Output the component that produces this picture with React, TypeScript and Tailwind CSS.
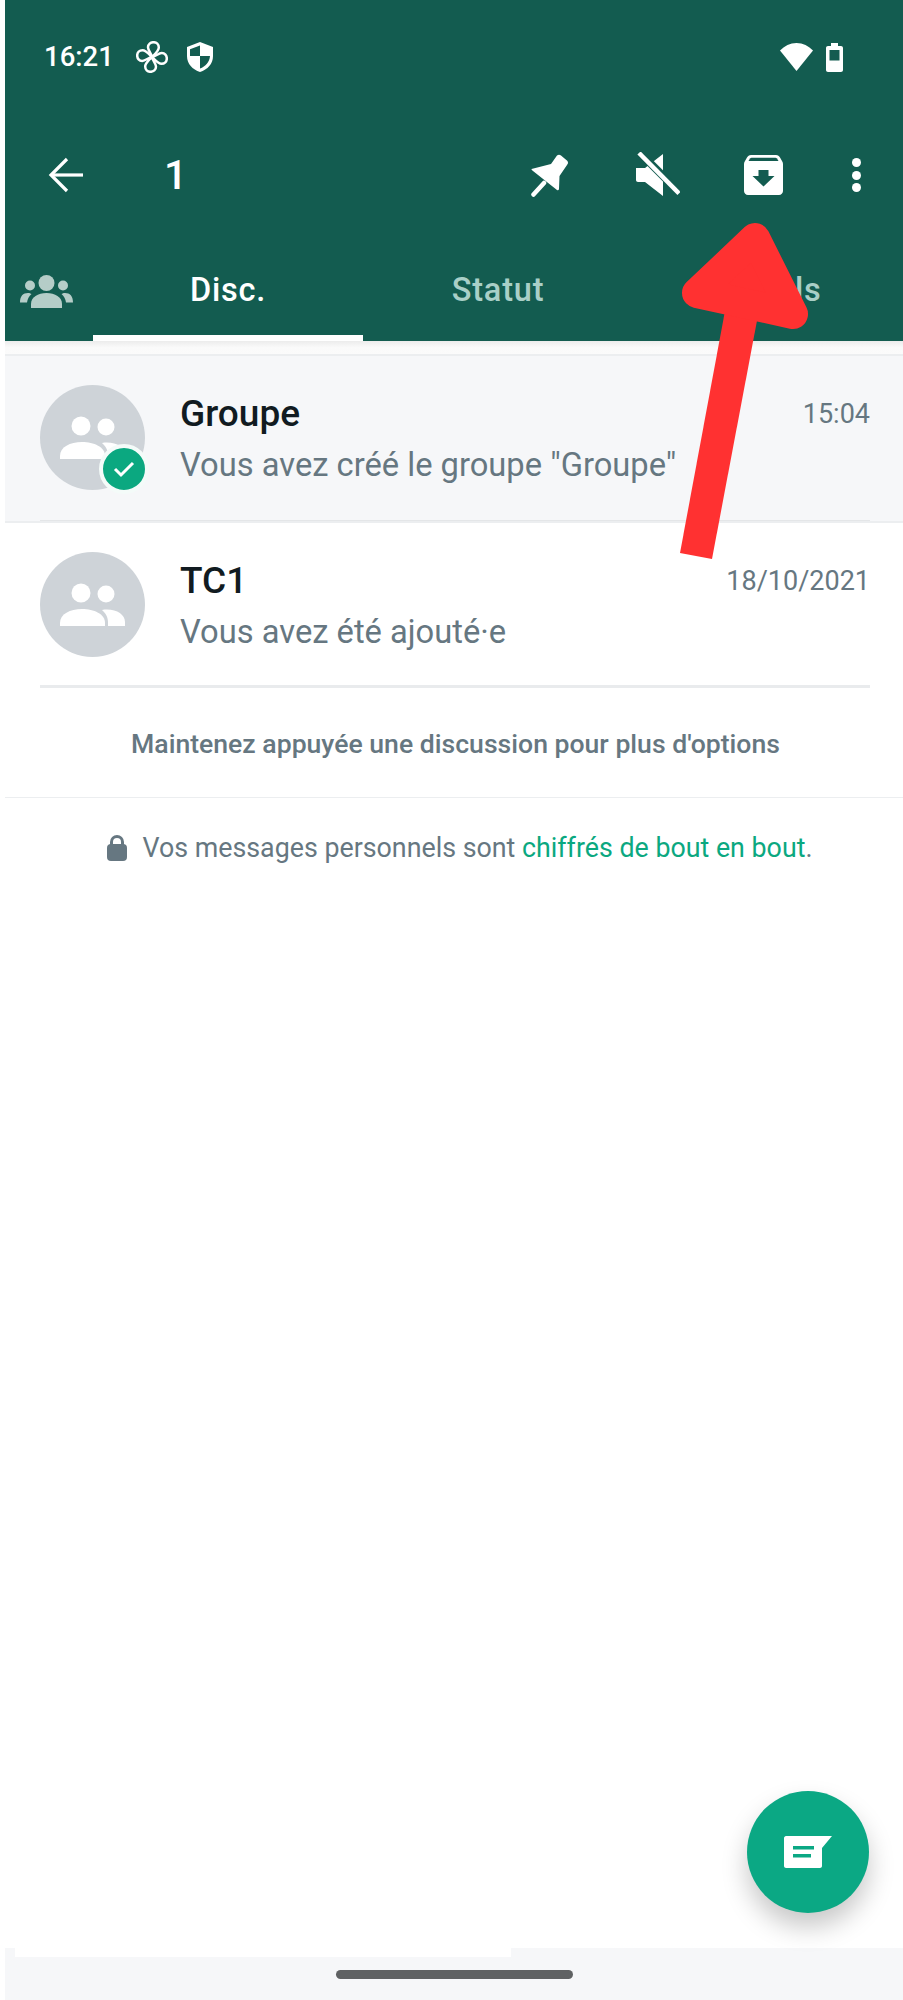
import React from "react";

function Fan() {
  const petal = "M16 16C15.500 12.500 12 9.500 12 6.200 12 3.200 14.500 1.200 17.500 1.200 20.500 1.200 22.800 3.500 22.800 6.500 22.800 10 19 13 16 16Z";
  return (
    <svg width="32" height="32" viewBox="0 0 32 32" fill="none" stroke="white" strokeWidth="2.500" strokeLinejoin="round">
      <path d={petal} />
      <path d={petal} transform="rotate(90 16 16)" />
      <path d={petal} transform="rotate(180 16 16)" />
      <path d={petal} transform="rotate(270 16 16)" />
    </svg>
  );
}

function Shield() {
  return (
    <svg width="26" height="30" viewBox="0 0 26 30">
      <path d="M13 0 26 5V14C26 22 20.500 27.500 13 30 5.500 27.500 0 22 0 14V5Z" fill="white" />
      <path d="M13 3.500 3 7.300V14H13ZM13 14V26.500C18.500 24.500 22.600 20 23 14Z" fill="#135c50" />
    </svg>
  );
}

function Wifi() {
  return (
    <svg width="33" height="28" viewBox="0 0 33 28">
      <path d="M0 7.500C4.500 3 10 0 16.500 0S28.500 3 33 7.500L16.500 28Z" fill="white" />
    </svg>
  );
}

function Battery() {
  return (
    <svg width="17" height="29" viewBox="0 0 17 29">
      <path d="M5 0H12V3H15C16.100 3 17 3.900 17 5V27C17 28.100 16.100 29 15 29H2C.9 29 0 28.100 0 27V5C0 3.900.9 3 2 3H5Z" fill="white" />
      <rect x="3.500" y="7" width="10" height="10.500" fill="#135c50" />
    </svg>
  );
}

function Back() {
  return (
    <svg width="36" height="36" viewBox="0 0 36 36" fill="none" stroke="white" strokeWidth="3.200">
      <path d="M35 18H3" />
      <path d="M19 2 3 18 19 34" />
    </svg>
  );
}

function Pin() {
  return (
    <svg width="38" height="43" viewBox="0 0 38 43">
      <path d="M.5 15 20 10 26 1.500Q28 0 30 1.500L36.500 7Q38 9 36 11L28.500 22 28 35Q27.500 37 26 36L2 17Q0 15.500.5 15Z" fill="white" />
      <path d="M13 29 2.500 40.500" stroke="white" strokeWidth="4.500" strokeLinecap="round" />
    </svg>
  );
}

function Mute() {
  return (
    <svg width="44" height="46" viewBox="0 0 44 46">
      <path d="M0 16H9L27 2V44L9 30H2C.9 30 0 29.100 0 28Z" fill="white" />
      <path d="M3 0 44 41" stroke="#135c50" strokeWidth="8" />
      <path d="M3 1 43 41.500" stroke="white" strokeWidth="4.500" />
    </svg>
  );
}

function Archive() {
  return (
    <svg width="39" height="40" viewBox="0 0 39 40">
      <path d="M7 0H32C34 0 35 1 36 2.500L38 6C38.700 7 39 8 39 9V36C39 38.200 37.200 40 35 40H4C1.800 40 0 38.200 0 36V9C0 8 .3 7 1 6L3 2.500C4 1 5 0 7 0Z" fill="white" />
      <path d="M4.500 6H34.500L33 3.500C32.500 3 32 2.700 31.500 2.700H7.500C7 2.700 6.500 3 6 3.500Z" fill="#135c50" />
      <path d="M14.500 15H24.500V21H30.500L19.500 31.500 8.500 21H14.500Z" fill="#135c50" />
    </svg>
  );
}

function Community() {
  return (
    <svg width="53" height="33" viewBox="0 0 53 33" fill="#b5cdc8">
      <circle cx="26.500" cy="8" r="8" />
      <circle cx="10" cy="10.500" r="5" />
      <circle cx="43" cy="10.500" r="5" />
      <path d="M11 33V29C11 22 18 18 26.500 18S42 22 42 29V33Z" />
      <path d="M0 27.500C0 21 3 18 8 18 9.500 18 10.500 18.500 11.500 19 9 21 7.500 24 7 27.500Z" />
      <path d="M53 27.500C53 21 50 18 45 18 43.500 18 42.500 18.500 41.500 19 44 21 45.500 24 46 27.500Z" />
    </svg>
  );
}

function Avatar({ badge }: { badge?: boolean }) {
  return (
    <div className="relative h-[105px] w-[105px] shrink-0">
      <svg width="105" height="105" viewBox="0 0 105 105">
        <circle cx="52.500" cy="52.500" r="52.500" fill="#ced3d8" />
        <circle cx="41" cy="41" r="9.500" fill="white" />
        <circle cx="66" cy="42" r="8.500" fill="white" />
        <path d="M20 74V71C20 62 30 57 42 57S65 62 65 71V74Z" fill="white" />
        <path d="M68 74V70C68 65 65.500 61 62 58 75 56 85 62 85 70V74Z" fill="white" />
      </svg>
      {badge && (
        <div className="absolute left-[59px] top-[59px] flex h-[50px] w-[50px] items-center justify-center rounded-full border-[4px] border-[#f4fbf9] bg-[#0ba880]">
          <svg width="22" height="18" viewBox="0 0 22 18" fill="none" stroke="white" strokeWidth="3">
            <path d="M2 9 8 15 20 3" />
          </svg>
        </div>
      )}
    </div>
  );
}

function Row({
  title,
  sub,
  time,
  badge,
  active,
}: {
  title: string;
  sub: string;
  time: string;
  badge?: boolean;
  active?: boolean;
}) {
  return (
    <div className={active ? "h-[167px] border-b-[2px] border-[#eceef0] bg-[#f6f7f9] pl-[35px] pr-[33px]" : "h-[165px] bg-white pl-[35px] pr-[33px]"}>
      <div className={active ? "flex h-[165px] items-start gap-[35px] border-b-[1px] border-[#e4e6e8] pt-[29px]" : "flex h-[165px] items-start gap-[35px] border-b-[3px] border-[#e9ebed] pt-[29px]"}>
        <Avatar badge={badge} />
        <div className="min-w-0 flex-1 pt-[7px]">
          <div className="flex items-start justify-between">
            <span className="text-[37px] font-medium leading-[44px] text-[#111b21]">{title}</span>
            <span className="pt-[6px] text-[27px] leading-[32px] text-[#667781]">{time}</span>
          </div>
          <div className="mt-[9px] text-[32.700px] leading-[40px] text-[#667781]">{sub}</div>
        </div>
      </div>
    </div>
  );
}

export default function App() {
  return (
    <div className="relative h-[2000px] w-[903px] overflow-hidden bg-white pl-[5px] font-['Roboto',sans-serif]">
      <div className="relative flex h-full flex-col">
        <header className="flex h-[341px] shrink-0 flex-col bg-[#135c50] text-white">
          <div className="flex h-[114px] items-center justify-between pl-[39px] pr-[60px]">
            <div className="flex items-center">
              <span className="text-[27.500px] font-medium leading-none">16:21</span>
              <span className="ml-[22px] flex"><Fan /></span>
              <span className="ml-[19px] flex"><Shield /></span>
            </div>
            <div className="flex items-center gap-[13px]">
              <Wifi />
              <Battery />
            </div>
          </div>
          <div className="flex h-[118px] items-center pl-[43px] pr-[42px] pt-[4px]">
            <Back />
            <span className="ml-[80px] text-[41px] font-medium leading-none">1</span>
            <div className="ml-auto flex items-center">
              <Pin />
              <span className="ml-[67px] flex"><Mute /></span>
              <span className="ml-[64px] flex"><Archive /></span>
              <span className="ml-[69px] flex flex-col gap-[3.500px]">
                <span className="h-[9px] w-[9px] rounded-full bg-white" />
                <span className="h-[9px] w-[9px] rounded-full bg-white" />
                <span className="h-[9px] w-[9px] rounded-full bg-white" />
              </span>
            </div>
          </div>
          <div className="flex h-[109px]">
            <div className="flex w-[88px] items-center justify-center pt-[10px] pr-[5px]">
              <Community />
            </div>
            <div className="flex w-[270px] items-center justify-center border-b-[6px] border-white pt-[13px] text-[32.500px] font-medium tracking-[0.8px]">
              Disc.
            </div>
            <div className="flex w-[270px] items-center justify-center pt-[7px] text-[32.500px] font-medium tracking-[0.8px] text-[#a9cfc7]">
              Statut
            </div>
            <div className="flex w-[270px] items-center justify-center pt-[7px] pl-[2px] text-[32.500px] font-medium tracking-[0.8px] text-[#a9cfc7]">
              Appels
            </div>
          </div>
        </header>

        <div className="h-[15px] shrink-0 border-b-[2px] border-[#eceef0] bg-gradient-to-b from-[#ececec] via-[#fafafa] to-[#fbfbfb]" />
        <Row active badge title="Groupe" sub={'Vous avez créé le groupe "Groupe"'} time="15:04" />
        <Row title="TC1" sub="Vous avez été ajouté·e" time="18/10/2021" />

        <div className="flex h-[110px] shrink-0 items-center justify-center border-b-[1px] border-[#eceef0] pt-[4px] pl-[3px] text-[26.600px] font-medium leading-none text-[#667781]">
          Maintenez appuyée une discussion pour plus d'options
        </div>
        <div className="flex items-center justify-center pt-[35px] pl-[12px] text-[26.800px] leading-[30px] text-[#667781]">
          <svg width="20" height="26" viewBox="0 0 20 26" className="mr-[15px]">
            <path d="M3 10V7A7 7 0 0 1 17 7V10H14V7A4 4 0 0 0 6 7V10Z" fill="#667781" />
            <rect x="0" y="9" width="20" height="17" rx="4" fill="#667781" />
          </svg>
          <span>Vos messages personnels sont&nbsp;</span>
          <span className="text-[#0ba880]">chiffrés de bout en bout</span>
          <span>.</span>
        </div>

        <div className="mt-auto flex h-[52px] shrink-0 items-start justify-center bg-[#f6f7f9] pt-[22px]">
          <div className="h-[9px] w-[237px] rounded-full bg-[#5f6163]" />
        </div>
      </div>

      <div className="absolute left-[15px] top-[1948px] h-[9px] w-[496px] bg-white" />

      <div className="absolute left-[747px] top-[1791px] flex h-[122px] w-[122px] items-center justify-center rounded-full bg-[#0ba884] shadow-[0_14px_26px_rgba(0,0,0,0.22)]">
        <svg width="50" height="34" viewBox="0 0 50 34">
          <path d="M3 1H49L39 13V31C39 32 38 33 37 33H3C2 33 1 32 1 31V3C1 2 2 1 3 1Z" fill="white" />
          <rect x="10" y="11" width="21" height="3.500" fill="#0ba884" />
          <rect x="10" y="19" width="18" height="3.500" fill="#0ba884" />
        </svg>
      </div>

      <svg className="absolute left-0 top-0" width="903" height="600" viewBox="0 0 903 600">
        <path d="M727 300 680 553 712 559 759 310Z" fill="#ff3131" />
        <path
          d="M755 238 697 293 793 314 Z"
          fill="#ff3131"
          stroke="#ff3131"
          strokeWidth="30"
          strokeLinejoin="round"
        />
      </svg>
    </div>
  );
}
